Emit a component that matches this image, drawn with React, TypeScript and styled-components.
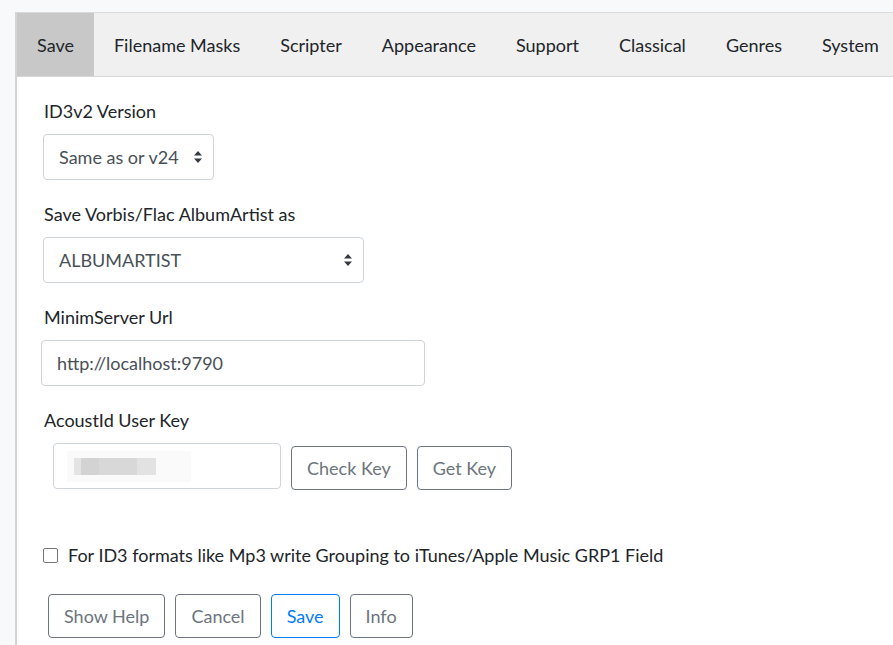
import React from "react";
import styled, {createGlobalStyle} from "styled-components";

const GlobalStyle = createGlobalStyle({
  "html, body": {
    margin: 0,
    padding: 0,
    backgroundColor: "#F8F9FA",
    fontFamily: "Lato, 'Open Sans', sans-serif",
    color: "#212529",
    overflow: "hidden",
  },
});

const Page = styled.div({
  paddingTop: 12,
  paddingLeft: 15,
  height: 645,
  boxSizing: "border-box",
});

const Panel = styled.div({
  backgroundColor: "#FFF",
  borderTop: "1px solid #DADADA",
  borderLeft: "2px solid #D4D4D4",
  height: "100%",
  boxSizing: "border-box",
});

const TabBar = styled.div({
  display: "flex",
  backgroundColor: "#F0F0F0",
  borderBottom: "1px solid #D6D6D6",
  height: 63,
  whiteSpace: "nowrap",
  overflow: "hidden",
});

const Tab = styled.div<{$active?: boolean}>(({$active}) => ({
  display: "flex",
  alignItems: "center",
  padding: "0 20px",
  fontSize: 18,
  color: "#212529",
  backgroundColor: $active ? "#C8C8C8" : "transparent",
}));

const Content = styled.div({
  padding: "21px 0 0 27px",
});

const Group = styled.div({
  marginBottom: 21,
});

const Label = styled.div({
  fontSize: 18,
  lineHeight: "27px",
  marginBottom: 9,
});

const controlBase = {
  boxSizing: "border-box" as const,
  height: 46,
  border: "1px solid #CED4DA",
  borderRadius: 4,
  backgroundColor: "#FFF",
  color: "#495057",
  fontSize: 18,
  display: "flex",
  alignItems: "center",
};

const Select = styled.div<{$width: number}>(({$width}) => ({
  ...controlBase,
  width: $width,
  marginLeft: -1,
  padding: "0 10px 0 15px",
  justifyContent: "space-between",
}));

const Input = styled.div<{$width: number; $indent?: number}>(({$width, $indent = 0}) => ({
  ...controlBase,
  width: $width,
  marginLeft: $indent,
  padding: "0 15px",
}));

const KeyRow = styled.div({
  display: "flex",
  alignItems: "flex-start",
  gap: 10,
  marginTop: 1,
});

// redacted key value, smudged out
const Smudge = styled.div({
  display: "flex",
  alignItems: "center",
  width: 124,
  height: 31,
  marginLeft: -2,
  backgroundColor: "#FAFAFA",
  paddingLeft: 7,
  boxSizing: "border-box",
});

const SmudgeBlock = styled.span<{$w: number; $c: string}>(({$w, $c}) => ({
  display: "inline-block",
  width: $w,
  height: 17,
  backgroundColor: $c,
}));

const Button = styled.button<{$primary?: boolean; $offset?: number}>(({$primary, $offset = 0}) => ({
  boxSizing: "border-box",
  height: 44,
  marginTop: $offset,
  padding: "0 15px",
  fontFamily: "inherit",
  fontSize: 18,
  backgroundColor: "#FFF",
  color: $primary ? "#007BFF" : "#6C757D",
  border: `1px solid ${$primary ? "#007BFF" : "#6C757D"}`,
  borderRadius: 4,
}));

const CheckRow = styled.label({
  display: "flex",
  alignItems: "center",
  gap: 10,
  fontSize: 18,
  lineHeight: "27px",
  marginTop: 52,
  marginLeft: -1,
});

const CheckBox = styled.span({
  width: 13,
  height: 13,
  border: "1px solid #767676",
  borderRadius: 2,
  backgroundColor: "#FFF",
});

const Actions = styled.div({
  display: "flex",
  gap: 10,
  marginTop: 25,
  marginLeft: 4,
});

function SortArrows() {
  return (
    <svg width="10" height="14" viewBox="0 0 10 14">
      <path d="M5 1 L9 5.5 H1 Z M5 13 L9 8.5 H1 Z" fill="#343A40" />
    </svg>
  );
}

const tabs = ["Save", "Filename Masks", "Scripter", "Appearance", "Support", "Classical", "Genres", "System"];

export default function App() {
  return (
    <>
      <GlobalStyle />
      <Page>
        <Panel>
          <TabBar>
            {tabs.map((t, i) => (
              <Tab key={t} $active={i === 0}>
                {t}
              </Tab>
            ))}
          </TabBar>
          <Content>
            <Group>
              <Label>ID3v2 Version</Label>
              <Select $width={171}>
                <span>Same as or v24</span>
                <SortArrows />
              </Select>
            </Group>
            <Group>
              <Label>Save Vorbis/Flac AlbumArtist as</Label>
              <Select $width={321}>
                <span>ALBUMARTIST</span>
                <SortArrows />
              </Select>
            </Group>
            <Group>
              <Label>MinimServer Url</Label>
              <Input $width={384} $indent={-3}>http://localhost:9790</Input>
            </Group>
            <Group>
              <Label>AcoustId User Key</Label>
              <KeyRow>
                <Input $width={228} $indent={9}>
                  <Smudge>
                    <SmudgeBlock $w={7} $c="#E4E4E4" />
                    <SmudgeBlock $w={18} $c="#D3D3D3" />
                    <SmudgeBlock $w={38} $c="#D8D8D8" />
                    <SmudgeBlock $w={19} $c="#E2E2E2" />
                  </Smudge>
                </Input>
                <Button $offset={3}>Check Key</Button>
                <Button $offset={3}>Get Key</Button>
              </KeyRow>
            </Group>
            <CheckRow>
              <CheckBox />
              For ID3 formats like Mp3 write Grouping to iTunes/Apple Music GRP1 Field
            </CheckRow>
            <Actions>
              <Button>Show Help</Button>
              <Button>Cancel</Button>
              <Button $primary>Save</Button>
              <Button>Info</Button>
            </Actions>
          </Content>
        </Panel>
      </Page>
    </>
  );
}
